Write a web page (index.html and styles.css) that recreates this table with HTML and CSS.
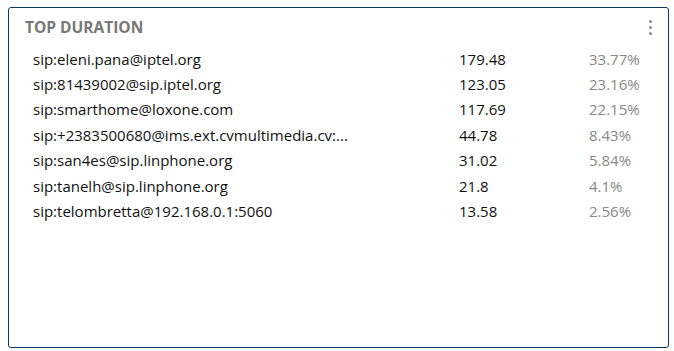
FILE: index.html
```html
<!DOCTYPE html>
<html>
<head>
<meta charset="utf-8">
<link rel="stylesheet" href="styles.css">
</head>
<body>
<div class="card">
  <div class="card-head">
    <div class="title">TOP DURATION</div>
    <div class="kebab"><span></span><span></span><span></span></div>
  </div>
  <div class="rows">
    <div class="row"><div class="name">sip:eleni.pana@iptel.org</div><div class="val">179.48</div><div class="pct">33.77%</div></div>
    <div class="row"><div class="name">sip:81439002@sip.iptel.org</div><div class="val">123.05</div><div class="pct">23.16%</div></div>
    <div class="row"><div class="name">sip:smarthome@loxone.com</div><div class="val">117.69</div><div class="pct">22.15%</div></div>
    <div class="row"><div class="name">sip:+2383500680@ims.ext.cvmultimedia.cv:...</div><div class="val">44.78</div><div class="pct">8.43%</div></div>
    <div class="row"><div class="name">sip:san4es@sip.linphone.org</div><div class="val">31.02</div><div class="pct">5.84%</div></div>
    <div class="row"><div class="name">sip:tanelh@sip.linphone.org</div><div class="val">21.8</div><div class="pct">4.1%</div></div>
    <div class="row"><div class="name">sip:telombretta@192.168.0.1:5060</div><div class="val">13.58</div><div class="pct">2.56%</div></div>
  </div>
</div>
</body>
</html>
```
FILE: styles.css
```css
html, body {
  margin: 0;
  padding: 0;
  background: #fff;
}
body {
  padding: 7px 5px 3px 8px;
  font-family: "Open Sans", "Noto Sans", sans-serif;
}
.card {
  box-sizing: border-box;
  height: 341px;
  border: 1px solid #0d3763;
  border-radius: 3px;
  padding: 0 0 0 16px;
}
.card-head {
  display: flex;
  justify-content: space-between;
  align-items: center;
  height: 38px;
  padding-right: 16px;
}
.title {
  font-size: 15.5px;
  font-weight: 700;
  color: #777;
}
.kebab {
  display: flex;
  flex-direction: column;
  gap: 3px;
}
.kebab span {
  width: 3px;
  height: 3px;
  background: #888;
  border-radius: 50%;
}
.rows {
  padding-left: 8px;
}
.row {
  display: grid;
  grid-template-columns: 426px 130px 80px;
  height: 25.4px;
  align-items: center;
  font-size: 15px;
  color: #111;
}
.name, .val {
  white-space: nowrap;
}
.pct {
  color: #888;
}
```
